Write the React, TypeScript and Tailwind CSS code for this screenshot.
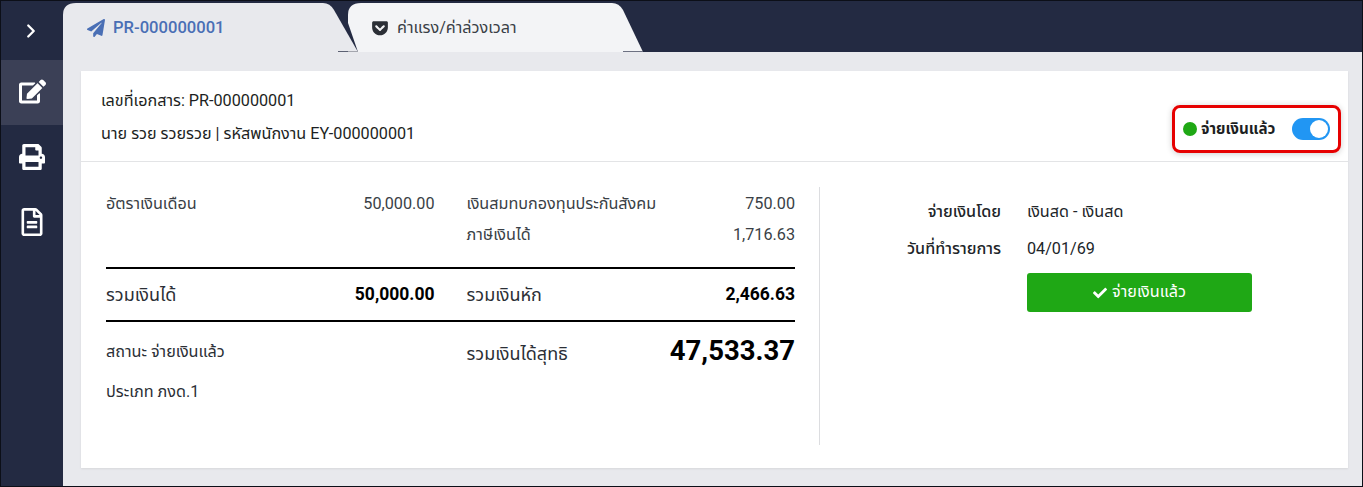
import { ChevronRight } from "lucide-react";
import { FaCheck, FaEdit, FaGetPocket, FaPaperPlane, FaPrint, FaRegFileAlt } from "react-icons/fa";

function Tab1Shape() {
  return (
    <svg className="absolute top-0 left-0" width="296" height="51" viewBox="0 0 296 51">
      <path d="M0 51V14Q0 2 13 2H260Q267 2 271 9L295 51Z" fill="#e8e9ed" />
      <rect x="275" y="50" width="11" height="1" fill="#5c6173" />
    </svg>
  );
}

function Tab2Shape() {
  return (
    <svg className="absolute top-0 left-0" width="296" height="51" viewBox="0 0 296 51">
      <path d="M10 51L0 22V14Q0 2 13 2H264Q271 2 275 9L295 51Z" fill="#f3f4f6" />
      <rect x="0" y="50" width="10" height="1" fill="#a4a6ae" />
      <rect x="275" y="50" width="20" height="1" fill="#6d7182" />
    </svg>
  );
}

function SideItem({ active, children }: { active?: boolean; children: React.ReactNode }) {
  return (
    <div className={`h-[65px] pb-[2px] flex items-center justify-center text-white ${active ? "bg-[#3b4056]" : ""}`}>
      {children}
    </div>
  );
}

export default function App() {
  return (
    <div className="w-[1363px] h-[487px] overflow-hidden border border-[#0c0f18] bg-[#232a42] flex font-['Roboto','Noto_Sans_Thai','Noto_Sans',sans-serif] text-[16.2px] text-[#212529]">
      {/* Sidebar */}
      <div className="w-[62px] shrink-0 flex flex-col">
        <div className="h-[59px] pr-[2px] flex items-center justify-center text-white">
          <ChevronRight size={22} strokeWidth={2.5} />
        </div>
        <SideItem active>
          <FaEdit size={27} />
        </SideItem>
        <SideItem>
          <FaPrint size={26} />
        </SideItem>
        <SideItem>
          <FaRegFileAlt size={28} />
        </SideItem>
      </div>

      <div className="flex-1 min-w-0 flex flex-col">
        {/* Tabs */}
        <div className="h-[51px] shrink-0 flex">
          <div className="relative w-[285px] h-[51px] z-10">
            <Tab1Shape />
            <div className="relative h-full pl-[24px] pt-[3px] flex items-center gap-[8px] text-[16.6px] font-medium text-[#4a6fb5]">
              <FaPaperPlane size={18} />
              <span>PR-000000001</span>
            </div>
          </div>
          <div className="relative w-[296px] h-[51px] z-20">
            <Tab2Shape />
            <div className="relative h-full pl-[23px] pt-[3px] flex items-center gap-[8px] text-[#3a3f46]">
              <FaGetPocket size={18} className="text-[#2b2f36]" />
              <span>ค่าแรง/ค่าล่วงเวลา</span>
            </div>
          </div>
        </div>

        {/* Content */}
        <div className="flex-1 bg-[#e8e9ed] pt-[19px] pl-[18px] pr-[14px] pb-[18px]">
          <div className="h-full bg-white shadow-[0_1px_2px_rgba(0,0,0,0.08)] flex flex-col">
            {/* Header */}
            <div className="h-[91px] shrink-0 border-b border-[#e3e4e6] pl-[20px] pr-[7px] flex justify-between">
              <div className="pt-[19px] flex flex-col gap-[11px] leading-[22px] text-[#1d1f23]">
                <div>เลขที่เอกสาร: PR-000000001</div>
                <div>นาย รวย รวยรวย | รหัสพนักงาน EY-000000001</div>
              </div>
              <div className="mt-[34px] w-[169px] h-[48px] border-[3px] border-[#e60000] rounded-[8px] shadow-[0_1px_6px_rgba(0,0,0,0.2)] pl-[8px] pr-[8px] flex items-center">
                <span className="w-[14px] h-[14px] rounded-full bg-[#1fa815] mr-[4px]" />
                <span className="font-bold text-[15.2px] text-[#1d1f23]">จ่ายเงินแล้ว</span>
                <span className="ml-auto w-[38px] h-[22px] rounded-full bg-[#2196f3] flex items-center justify-end pr-[2px]">
                  <span className="w-[18px] h-[18px] rounded-full bg-white" />
                </span>
              </div>
            </div>

            {/* Body */}
            <div className="flex-1 pt-[25px] pb-[23px] flex">
              <div className="w-[739px] shrink-0 border-r border-[#dcdde0] pl-[25px] pr-[24px]">
                <div className="grid grid-cols-2 gap-x-[32px] text-[#3a3f46] h-[80px] pt-[2px]">
                  <div className="flex justify-between h-[31px] items-center">
                    <span>อัตราเงินเดือน</span>
                    <span>50,000.00</span>
                  </div>
                  <div className="flex flex-col">
                    <div className="flex justify-between h-[31px] items-center">
                      <span>เงินสมทบกองทุนประกันสังคม</span>
                      <span>750.00</span>
                    </div>
                    <div className="flex justify-between h-[31px] items-center">
                      <span>ภาษีเงินได้</span>
                      <span>1,716.63</span>
                    </div>
                  </div>
                </div>
                <div className="h-[55px] border-y-2 border-black grid grid-cols-2 gap-x-[32px] items-center">
                  <div className="flex justify-between items-center">
                    <span className="text-[18px] text-[#2b2f36]">รวมเงินได้</span>
                    <span className="text-[17.5px] font-bold text-black">50,000.00</span>
                  </div>
                  <div className="flex justify-between items-center">
                    <span className="text-[18px] text-[#2b2f36]">รวมเงินหัก</span>
                    <span className="text-[17.5px] font-bold text-black">2,466.63</span>
                  </div>
                </div>
                <div className="pt-[12px] grid grid-cols-2 gap-x-[32px]">
                  <div className="flex flex-col gap-[11px] text-[#2b2f36]">
                    <div className="leading-[36px]">สถานะ จ่ายเงินแล้ว</div>
                    <div className="leading-[22px]">ประเภท ภงด.1</div>
                  </div>
                  <div className="flex justify-between items-start">
                    <span className="text-[18px] leading-[40px] text-[#2b2f36]">รวมเงินได้สุทธิ</span>
                    <span className="text-[27.5px] font-bold leading-[32px] pt-[1px] text-black">47,533.37</span>
                  </div>
                </div>
              </div>

              <div className="flex-1 pt-[14px] pl-[26px]">
                <div className="grid grid-cols-[155px_1fr] gap-x-[26px] gap-y-[15px] leading-[22px]">
                  <span className="text-right font-medium">จ่ายเงินโดย</span>
                  <span>เงินสด - เงินสด</span>
                  <span className="text-right font-medium">วันที่ทำรายการ</span>
                  <span>04/01/69</span>
                </div>
                <div className="ml-[181px] mt-[13px] w-[225px] h-[39px] rounded-[3px] bg-[#1fa815] text-white flex items-center justify-center gap-[5px]">
                  <FaCheck size={14} />
                  <span>จ่ายเงินแล้ว</span>
                </div>
              </div>
            </div>
          </div>
        </div>
      </div>
    </div>
  );
}
